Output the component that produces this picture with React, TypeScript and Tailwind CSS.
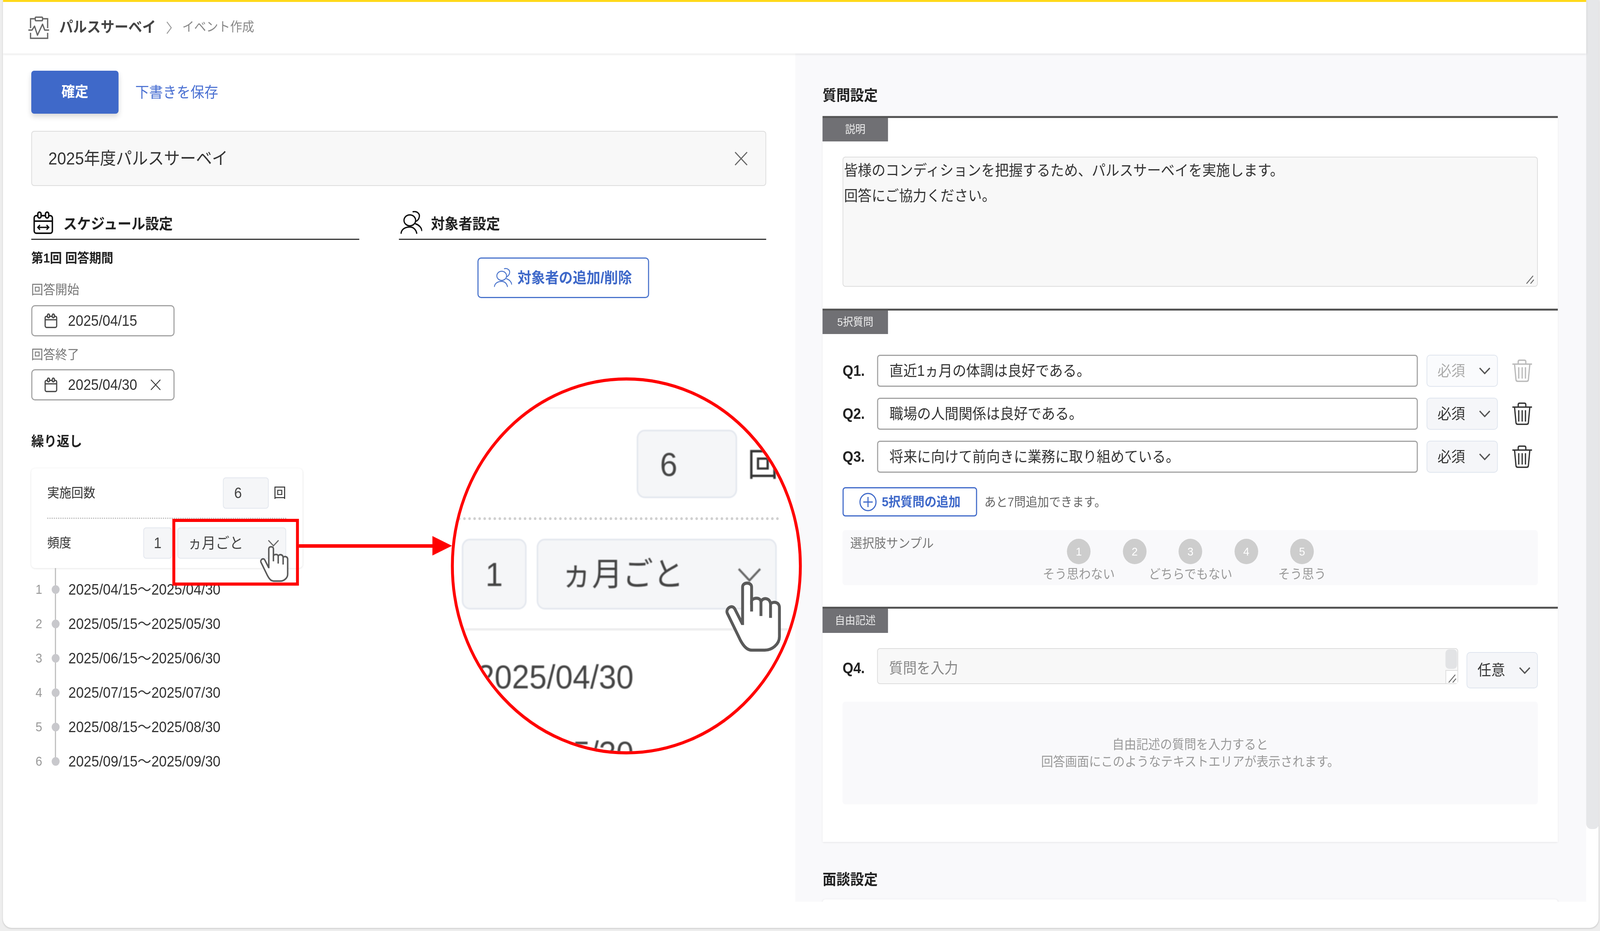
import React from "react";

const periods = [
  "2025/04/15〜2025/04/30",
  "2025/05/15〜2025/05/30",
  "2025/06/15〜2025/06/30",
  "2025/07/15〜2025/07/30",
  "2025/08/15〜2025/08/30",
  "2025/09/15〜2025/09/30",
];

const questions = [
  { no: "Q1.", text: "直近1ヵ月の体調は良好である。", off: true },
  { no: "Q2.", text: "職場の人間関係は良好である。", off: false },
  { no: "Q3.", text: "将来に向けて前向きに業務に取り組めている。", off: false },
];

const samples = [
  { n: 1, label: "そう思わない" },
  { n: 2, label: "" },
  { n: 3, label: "どちらでもない" },
  { n: 4, label: "" },
  { n: 5, label: "そう思う" },
];

function PulseIcon() {
  return (
    <svg width="62" height="62" viewBox="0 0 62 62" fill="none" stroke="#666" strokeWidth="3.5">
      <rect x="21" y="4" width="20" height="9" rx="2" />
      <path d="M21 8H8V32M41 8H55V32" />
      <path d="M2 37H12L19 27L27 50L41 22L47 37H59" strokeLinejoin="round" />
      <path d="M8 44V58H55V44" />
    </svg>
  );
}

function CalendarIcon({ big }: { big?: boolean }) {
  return (
    <svg
      width={big ? 56 : 38}
      height={big ? 60 : 38}
      viewBox="0 0 56 60"
      fill="none"
      stroke={big ? "#111" : "#444"}
      strokeWidth={big ? 4 : 5}
    >
      <rect x="3" y="12" width="50" height="45" rx="6" />
      <path d="M3 26H53" />
      <rect x="13" y="3" width="9" height="15" rx="4.5" fill="#fff" />
      <rect x="34" y="3" width="9" height="15" rx="4.5" fill="#fff" />
      {big && <path d="M13 42H43M19 36L13 42L19 48M37 36L43 42L37 48" strokeWidth="3.5" />}
    </svg>
  );
}

function PeopleIcon({ size, color, sw }: { size: number; color: string; sw: number }) {
  return (
    <svg width={size} height={size} viewBox="0 0 60 60" fill="none" stroke={color} strokeWidth={sw} strokeLinecap="round">
      <ellipse cx="26" cy="24" rx="16" ry="14" />
      <path d="M2 57C3 47 13 41 26 41C36 41 43 48 45 57" />
      <path d="M35 2C46 0 54 7 52 15C51 21 47 25 42 27" />
      <path d="M42 33C52 36 58 43 59 50" />
    </svg>
  );
}

function Close({ size, color }: { size: number; color: string }) {
  return (
    <svg width={size} height={size} viewBox="0 0 30 30" fill="none" stroke={color} strokeWidth="2.4">
      <path d="M2 2L28 28M28 2L2 28" />
    </svg>
  );
}

function Chevron({ w = 32, h = 18, color = "#555", sw = 3.5 }: { w?: number; h?: number; color?: string; sw?: number }) {
  return (
    <svg width={w} height={h} viewBox="0 0 32 18" fill="none" stroke={color} strokeWidth={sw}>
      <path d="M2 2L16 16L30 2" />
    </svg>
  );
}

function Trash({ color }: { color: string }) {
  return (
    <svg width="56" height="60" viewBox="0 0 56 60" fill="none" stroke={color} strokeWidth="3.5" strokeLinejoin="round">
      <path d="M1 13H55" />
      <path d="M17 13V7Q17 3 21 3H34Q38 3 38 7V13" />
      <path d="M7 13L11 53Q11.5 57 16 57H40Q44.5 57 45 53L49 13" />
      <path d="M18.5 21V50M28 21V50M37 21V50" />
    </svg>
  );
}

function Hand({ w, h }: { w: number; h: number }) {
  return (
    <svg width={w} height={h} viewBox="90 160 485 565" fill="#fff" stroke="#5a5a5a" strokeWidth="24">
      <path d="M245 510V215C245 175 320 175 320 215V320C340 295 395 295 398 330C410 295 470 295 478 345C500 325 552 330 552 375V600C552 660 490 705 430 705H320C280 705 250 670 225 625L118 420C100 385 155 345 180 385L245 505Z" />
      <path d="M320 320V405M398 330V440M478 345V455" fill="none" />
    </svg>
  );
}

function Grip() {
  return (
    <svg width="28" height="24" viewBox="0 0 28 24" fill="none" stroke="#666" strokeWidth="2.5">
      <path d="M4 22L22 2M15 22L24 12" />
    </svg>
  );
}

function SectionHead({ title, tall }: { title: string; tall?: boolean }) {
  return (
    <div className={`w-[180px] bg-[#707074] flex items-center justify-center text-[28px] leading-none text-[#eeeeee] ${tall ? "h-[62px]" : "h-[60px]"}`}>
      {title}
    </div>
  );
}

function SmallSelect({ label, off }: { label: string; off?: boolean }) {
  return (
    <div className={`w-[196px] h-full rounded-[10px] border-[2px] border-[#dfe5ee] flex items-center justify-between pl-[28px] pr-[18px] text-[38px] ${off ? "bg-[#fafbfd] text-[#aaaaaa]" : "bg-[#f5f6f9] text-[#333333]"}`}>
      <span>{label}</span>
      <Chevron />
    </div>
  );
}

function DateField({ value, clear }: { value: string; clear?: boolean }) {
  return (
    <div className="w-[394px] h-[80px] rounded-[10px] border-[3px] border-[#a3a3a3] flex items-center pl-[32px] text-[38px] text-[#333333]">
      <CalendarIcon />
      <span className="ml-[28px]">{value}</span>
      {clear && (
        <span className="ml-[36px]">
          <Close size={30} color="#333" />
        </span>
      )}
    </div>
  );
}

function Callout() {
  // magnified copy of the frequency row, offsets are relative to the circle
  return (
    <div className="absolute left-[1240px] top-[966px] w-[965px] h-[965px] rounded-full border-[8px] border-[#ff0000] bg-white overflow-hidden text-[#444444]">
      <div className="absolute left-0 top-[68px] w-full h-[4px] bg-[#f4f4f5]" />
      <div className="absolute left-[503px] top-[126px] w-[276px] h-[175px] rounded-[22px] border-[4px] border-[#e3e7ee] bg-[#f5f6f8] flex items-center pl-[60px] text-[86px] leading-none blur-[1px]">
        6
      </div>
      <div className="absolute left-[808px] top-[166px] text-[84px] leading-[100px] text-[#333333] blur-[1px]">回</div>
      <div className="absolute left-[12px] top-[350px] w-[882px] border-t-[7px] border-dotted border-[#d0d0d0]" />
      <div className="absolute left-[22px] top-[405px] w-[178px] h-[181px] rounded-[22px] border-[4px] border-[#e3e7ee] bg-[#f5f6f8] flex items-center justify-center text-[86px] leading-none blur-[1px]">
        1
      </div>
      <div className="absolute left-[228px] top-[405px] w-[660px] h-[181px] rounded-[22px] border-[4px] border-[#e3e7ee] bg-[#f5f6f8] flex items-center pl-[64px] text-[84px] leading-none blur-[1px]">
        ヵ月ごと
      </div>
      <div className="absolute left-[779px] top-[478px] blur-[1px]">
        <Chevron w={68} h={38} color="#666" sw={2.6} />
      </div>
      <div className="absolute left-0 top-[634px] w-full h-[6px] bg-[#eeeeef]" />
      <div className="absolute left-[64px] top-[708px] text-[86px] leading-[100px] blur-[1px]">2025/04/30</div>
      <div className="absolute left-[64px] top-[903px] text-[86px] leading-[100px] blur-[1px]">2025/05/30</div>
      <div className="absolute left-[743px] top-[510px]">
        <Hand w={160} h={187} />
      </div>
    </div>
  );
}

export default function App() {
  // the design is 4400 wide; fit it to the window the page actually gets
  const fitX = Math.min(1, window.innerWidth / 4400);

  return (
    <div className="w-screen h-[2383px] overflow-hidden bg-[#eeeeee]">
      <div
        className="relative w-[4400px] h-[2383px] origin-top-left bg-[#eeeeee] font-['Liberation_Sans','Noto_Sans_CJK_JP',sans-serif] text-[#333333]"
        style={{ transform: `scaleX(${fitX})` }}
      >
        <div className="ml-[8px] w-[4388px] h-[2375px] bg-white rounded-b-[24px] overflow-hidden shadow-[0_2px_4px_rgba(0,0,0,0.15)]">
          {/* header */}
          <div className="relative z-10 w-[4354px] h-[137px] bg-white shadow-[0_2px_6px_rgba(0,0,0,0.1)] border-t-[5px] border-[#ffd91a] flex items-start pl-[68px] pt-[35px]">
            <PulseIcon />
            <span className="ml-[25px] mt-[5px] text-[38px] leading-[48px] font-bold text-[#444444]">パルスサーベイ</span>
            <svg className="ml-[28px] mt-[14px]" width="16" height="34" viewBox="0 0 16 34" fill="none" stroke="#999" strokeWidth="2.5">
              <path d="M2 2L14 17L2 32" />
            </svg>
            <span className="ml-[28px] mt-[6px] text-[33px] leading-[46px] text-[#888888]">イベント作成</span>
          </div>

          <div className="flex h-[2171px]">
            {/* left side */}
            <div className="w-[2179px] pl-[78px]">
              <div className="flex items-center mt-[44px]">
                <div className="w-[240px] h-[110px] rounded-[8px] bg-[#3f69c9] shadow-[0_8px_14px_rgba(0,0,0,0.15)] flex items-center justify-center text-[37px] font-bold text-white">
                  確定
                </div>
                <span className="ml-[46px] text-[38px] text-[#4a70d2]">下書きを保存</span>
              </div>

              <div className="mt-[44px] w-[2021px] h-[141px] rounded-[8px] border-[2px] border-[#dddddd] bg-[#f8f8f8] flex items-center justify-between pl-[45px] pr-[48px] text-[44px] text-[#333333]">
                <span>2025年度パルスサーベイ</span>
                <Close size={38} color="#666" />
              </div>

              <div className="flex mt-[64px]">
                <div className="w-[902px]">
                  <div className="h-[74px] border-b-[3px] border-[#333333] flex items-start pl-[5px]">
                    <CalendarIcon big />
                    <span className="ml-[27px] mt-[10px] text-[38px] leading-[46px] font-bold text-[#222222]">スケジュール設定</span>
                  </div>
                  <div className="mt-[27px] text-[33px] leading-[40px] font-bold text-[#222222]">第1回 回答期間</div>
                  <div className="mt-[41px] text-[33px] leading-[40px] text-[#777777]">回答開始</div>
                  <div className="mt-[19px]">
                    <DateField value="2025/04/15" />
                  </div>
                  <div className="mt-[27px] text-[33px] leading-[40px] text-[#777777]">回答終了</div>
                  <div className="mt-[17px]">
                    <DateField value="2025/04/30" clear />
                  </div>
                  <div className="mt-[85px] text-[35px] leading-[40px] font-bold text-[#222222]">繰り返し</div>

                  <div className="mt-[49px] w-[746px] h-[255px] rounded-[10px] bg-white shadow-[0_1px_6px_rgba(0,0,0,0.12)] pl-[44px] pr-[45px] pt-[23px]">
                    <div className="flex items-center h-[80px]">
                      <span className="text-[33px]">実施回数</span>
                      <div className="ml-auto w-[126px] h-[80px] rounded-[8px] border-[2px] border-[#e3e7ee] bg-[#f5f6f8] flex items-center pl-[29px] text-[38px] text-[#444444]">
                        6
                      </div>
                      <span className="ml-[13px] text-[35px]">回</span>
                    </div>
                    <div className="mt-[23px] border-t-[3px] border-dotted border-[#bbbbbb]" />
                    <div className="flex items-center h-[80px] mt-[22px]">
                      <span className="text-[33px]">頻度</span>
                      <div className="ml-auto w-[79px] h-[80px] rounded-[8px] border-[2px] border-[#e3e7ee] bg-[#f5f6f8] flex items-center justify-center text-[38px] text-[#444444]">
                        1
                      </div>
                      <div className="ml-[15px] w-[299px] h-[80px] rounded-[8px] border-[2px] border-[#e3e7ee] bg-[#f5f6f8] flex items-center justify-between pl-[27px] pr-[17px] text-[38px] text-[#444444]">
                        <span>ヵ月ごと</span>
                        <Chevron color="#666" sw={3} />
                      </div>
                    </div>
                  </div>

                  <div className="relative pt-[11px]">
                    <div className="absolute left-[65px] top-0 w-[3px] h-[495px] bg-[#bbbbbb]" />
                    {periods.map((p, i) => (
                      <div key={p} className="relative flex items-center h-[88px]">
                        <span className="w-[42px] text-center text-[33px] text-[#999999]">{i + 1}</span>
                        <span className="ml-[14px] w-[22px] h-[22px] rounded-full bg-[#c8c8cc]" />
                        <span className="ml-[24px] text-[38px] text-[#333333]">{p}</span>
                      </div>
                    ))}
                  </div>
                </div>

                <div className="ml-[109px] w-[1010px]">
                  <div className="h-[74px] border-b-[3px] border-[#333333] flex items-start pl-[4px]">
                    <PeopleIcon size={60} color="#111" sw={3.5} />
                    <span className="ml-[24px] mt-[10px] text-[38px] leading-[46px] font-bold text-[#222222]">対象者設定</span>
                  </div>
                  <div className="mt-[45px] ml-[216px] w-[472px] h-[104px] rounded-[10px] border-[3px] border-[#4a74cc] flex items-center pl-[42px] text-[38px] font-bold text-[#3f69c9]">
                    <PeopleIcon size={50} color="#4a74cc" sw={3} />
                    <span className="ml-[15px] whitespace-nowrap">対象者の追加/削除</span>
                  </div>
                </div>
              </div>
            </div>

            {/* right side */}
            <div className="w-[2175px] bg-[#f9f9fb] pl-[75px] overflow-hidden">
              <div className="mt-[87px] text-[38px] leading-[40px] font-bold text-[#222222]">質問設定</div>

              <div className="mt-[33px] w-[2022px] bg-white shadow-[0_1px_5px_rgba(0,0,0,0.1)]">
                <section className="border-t-[5px] border-[#555555] h-[493px]">
                  <SectionHead title="説明" />
                  <div className="relative mt-[39px] mx-[55px] h-[333px] rounded-[8px] border-[2px] border-[#dddddd] bg-[#f8f8f8] pl-[2px] pt-[1px] text-[38px] leading-[65px] text-[#333333]">
                    <div>皆様のコンディションを把握するため、パルスサーベイを実施します。</div>
                    <div>回答にご協力ください。</div>
                    <div className="absolute right-[5px] bottom-[4px]">
                      <Grip />
                    </div>
                  </div>
                </section>

                <section className="border-t-[5px] border-[#555555] h-[763px]">
                  <SectionHead title="5択質問" />
                  <div className="px-[55px] mt-[53px]">
                    <div className="flex flex-col gap-[28px]">
                      {questions.map((q) => (
                        <div key={q.no} className="flex items-center h-[82px]">
                          <span className="w-[95px] text-[38px] font-bold text-[#222222]">{q.no}</span>
                          <div className="w-[1487px] h-full rounded-[8px] border-[3px] border-[#a3a3a3] flex items-center pl-[31px] text-[38px] text-[#333333]">
                            {q.text}
                          </div>
                          <div className="ml-[24px] h-full">
                            <SmallSelect label="必須" off={q.off} />
                          </div>
                          <div className="ml-[39px]">
                            <Trash color={q.off ? "#bbbbbb" : "#333333"} />
                          </div>
                        </div>
                      ))}
                    </div>

                    <div className="flex items-center mt-[37px]">
                      <div className="w-[370px] h-[75px] rounded-[8px] border-[3px] border-[#3f69c9] flex items-center pl-[43px] text-[33px] font-bold text-[#3f69c9]">
                        <svg width="48" height="48" viewBox="0 0 48 48" fill="none" stroke="#3f69c9" strokeWidth="3">
                          <circle cx="24" cy="24" r="22" />
                          <path d="M24 11V37M11 24H37" />
                        </svg>
                        <span className="ml-[14px] whitespace-nowrap">5択質問の追加</span>
                      </div>
                      <span className="ml-[20px] text-[32px] text-[#666666]">あと7問追加できます。</span>
                    </div>

                    <div className="mt-[35px] h-[141px] rounded-[8px] bg-[#f9f9fb] flex pl-[21px] text-[33px]">
                      <div className="w-[552px] pt-[12px] leading-[44px] text-[#777777]">選択肢サンプル</div>
                      {samples.map((s) => (
                        <div key={s.n} className="w-[153.5px] flex flex-col items-center pt-[22px]">
                          <div className="w-[65px] h-[65px] shrink-0 rounded-full bg-[#cdcdcd] flex items-center justify-center text-[30px] text-white">
                            {s.n}
                          </div>
                          <div className="whitespace-nowrap leading-[44px] mt-[4px] text-[#999999]">{s.label}</div>
                        </div>
                      ))}
                    </div>
                  </div>
                </section>

                <section className="border-t-[5px] border-[#555555] h-[602px]">
                  <SectionHead title="自由記述" tall />
                  <div className="px-[55px] mt-[39px]">
                    <div className="flex items-start h-[103px]">
                      <span className="w-[95px] self-center text-[38px] font-bold text-[#222222]">Q4.</span>
                      <div className="relative w-[1598px] h-[92px] rounded-[8px] border-[2px] border-[#dddddd] bg-[#f8f8f8] flex items-center pl-[31px] pt-[10px] text-[38px] text-[#888888]">
                        質問を入力
                        <div className="absolute right-[1px] top-[1px] w-[32px] h-[50px] rounded-[10px] bg-[#e2e3e5]" />
                        <div className="absolute right-0 bottom-0 w-[33px] h-[34px] bg-white border-l-[2px] border-t-[2px] border-[#dddddd] flex items-end justify-end">
                          <Grip />
                        </div>
                      </div>
                      <div className="ml-[23px] mt-[10px] h-[93px]">
                        <SmallSelect label="任意" />
                      </div>
                    </div>
                    <div className="mt-[34px] h-[263px] rounded-[8px] bg-[#f9f9fb] flex flex-col items-center justify-center text-[33px] leading-[44px] text-[#999999]">
                      <div>自由記述の質問を入力すると</div>
                      <div>回答画面にこのようなテキストエリアが表示されます。</div>
                    </div>
                  </div>
                </section>
              </div>

              <div className="mt-[76px] text-[38px] leading-[40px] font-bold text-[#222222]">面談設定</div>
              <div className="mt-[31px] w-[2022px] h-[40px] rounded-t-[8px] bg-white shadow-[0_1px_5px_rgba(0,0,0,0.1)]" />
            </div>
          </div>
        </div>

        {/* page scrollbar */}
        <div className="absolute left-[4362px] top-0 w-[35px] h-[2122px] rounded-b-[14px] bg-[#e6e7e9]" />

        {/* annotation overlay */}
        <div className="absolute left-[474px] top-[1328px] w-[348px] h-[171px] border-[8px] border-[#ff0000]" />
        <div className="absolute left-[822px] top-[1393px] w-[370px] h-[9px] bg-[#ff0000]" />
        <svg className="absolute left-[1189px] top-[1372px]" width="54" height="50" viewBox="0 0 54 50">
          <polygon points="0,0 54,25 0,50" fill="#ff0000" />
        </svg>
        <div className="absolute left-[713px] top-[1395px]">
          <Hand w={82} h={96} />
        </div>
        <Callout />
      </div>
    </div>
  );
}
